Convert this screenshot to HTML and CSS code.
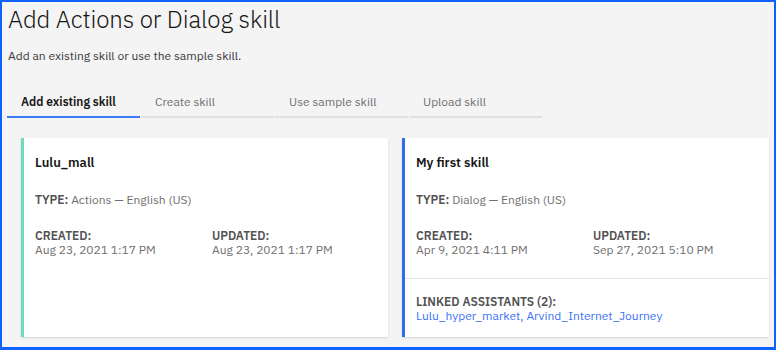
FILE: index.html
```html
<!DOCTYPE html>
<html lang="en">
<head>
<meta charset="utf-8">
<title>Add Actions or Dialog skill</title>
<link rel="stylesheet" href="styles.css">
</head>
<body>
<div class="frame">
  <h1 class="title">Add Actions or Dialog skill</h1>
  <p class="subtitle">Add an existing skill or use the sample skill.</p>
  <div class="tabs">
    <div class="tab active">Add existing skill</div>
    <div class="tab">Create skill</div>
    <div class="tab">Use sample skill</div>
    <div class="tab">Upload skill</div>
  </div>
  <div class="cards">
    <div class="card card-actions">
      <div class="card-main">
        <div class="card-name">Lulu_mall</div>
        <div class="card-type"><span class="label">TYPE:</span> Actions — English (US)</div>
        <div class="card-dates">
          <div class="meta"><div class="label">CREATED:</div><div class="value">Aug 23, 2021 1:17 PM</div></div>
          <div class="meta"><div class="label">UPDATED:</div><div class="value">Aug 23, 2021 1:17 PM</div></div>
        </div>
      </div>
    </div>
    <div class="card card-dialog">
      <div class="card-main">
        <div class="card-name">My first skill</div>
        <div class="card-type"><span class="label">TYPE:</span> Dialog — English (US)</div>
        <div class="card-dates">
          <div class="meta"><div class="label">CREATED:</div><div class="value">Apr 9, 2021 4:11 PM</div></div>
          <div class="meta"><div class="label">UPDATED:</div><div class="value">Sep 27, 2021 5:10 PM</div></div>
        </div>
      </div>
      <div class="card-linked">
        <div class="label">LINKED ASSISTANTS (2):</div>
        <div class="links"><a href="#">Lulu_hyper_market</a>, <a href="#">Arvind_Internet_Journey</a></div>
      </div>
    </div>
  </div>
</div>
</body>
</html>
```
FILE: styles.css
```css
html, body {
  margin: 0;
  padding: 0;
}
body {
  font-family: "IBM Plex Sans", Roboto, "Liberation Sans", sans-serif;
  color: #161616;
}
.frame {
  width: 776px;
  height: 350px;
  box-sizing: border-box;
  border: 2px solid #0f62fe;
  border-bottom-width: 3px;
  background: #f4f4f4;
  padding: 0 0 0 5px;
  overflow: hidden;
}
.title {
  margin: 2px 0 0 1px;
  font-size: 24px;
  line-height: 30px;
  font-weight: 300;
  letter-spacing: -0.1px;
  color: #161616;
}
.subtitle {
  margin: 13px 0 0 1px;
  font-size: 12px;
  line-height: 18px;
  color: #393939;
}
.tabs {
  display: flex;
  gap: 1px;
  margin-top: 15px;
}
.tab {
  width: 133px;
  box-sizing: border-box;
  padding: 13px 0 5px 14px;
  font-size: 12px;
  line-height: 18px;
  color: #6f6f6f;
  border-bottom: 2px solid #e0e0e0;
}
.tab.active {
  color: #161616;
  font-weight: 600;
  border-bottom-color: #3d7cf6;
}
.cards {
  display: grid;
  grid-template-columns: 367px 367px;
  gap: 14px;
  margin: 20px 0 0 14px;
  height: 199px;
}
.card {
  background: #fff;
  border-left: 3px solid #6fdac0;
  box-shadow: 0 1px 2px rgba(0, 0, 0, 0.12);
  display: flex;
  flex-direction: column;
}
.card-dialog {
  border-left-color: #2f6cf6;
}
.card-main {
  padding: 16px 11px 21px;
}
.card-name {
  font-size: 13px;
  line-height: 18px;
  font-weight: 600;
  color: #161616;
}
.card-type {
  margin-top: 19px;
  font-size: 12px;
  line-height: 18px;
  color: #6f6f6f;
}
.label {
  font-weight: 600;
  color: #525252;
}
.card-dates {
  display: grid;
  grid-template-columns: 177px 1fr;
  margin-top: 20px;
  font-size: 12px;
  line-height: 14px;
}
.value {
  color: #6f6f6f;
}
.card-linked {
  border-top: 1px solid #e5e5e5;
  padding: 16px 11px 0;
  font-size: 12px;
  line-height: 14px;
}
.links {
  color: #3c72f6;
}
.links a {
  color: #3c72f6;
  text-decoration: none;
}
```
